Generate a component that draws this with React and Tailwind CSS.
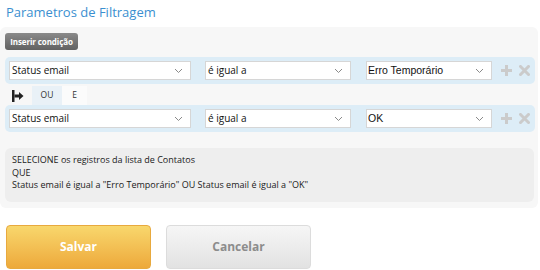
import React from 'react';

const Chevron = () => (
    <svg width="9" height="6" viewBox="0 0 9 6" className="shrink-0">
        <path d="M1 1 L4.5 4.5 L8 1" fill="none" stroke="#8a8a8a" strokeWidth="1" />
    </svg>
);

const Select = ({ value, width, arial }) => (
    <div
        className={`h-[19px] bg-white border border-[#d6d6d6] flex items-center justify-between pr-[7px] text-[#111] ${arial ? "font-['Liberation_Sans',sans-serif] text-[10.5px] pl-[1px]" : 'text-[10px] pl-[2px]'}`}
        style={{ width }}
    >
        <span>{value}</span>
        <Chevron />
    </div>
);

const PlusIcon = () => (
    <svg width="11" height="11" viewBox="0 0 11 11">
        <path d="M4 0 H7 V4 H11 V7 H7 V11 H4 V7 H0 V4 H4 Z" fill="#cbcbcb" />
    </svg>
);

const CloseIcon = () => (
    <svg width="11" height="11" viewBox="0 0 11 11">
        <path d="M1.5 1.5 L9.5 9.5 M9.5 1.5 L1.5 9.5" stroke="#cbcbcb" strokeWidth="3" strokeLinecap="square" />
    </svg>
);

const ConditionRow = ({ value }) => (
    <div className="w-[530px] h-[27px] bg-[#ddedf7] rounded-[5px] flex items-center pl-[4px]">
        <Select value="Status email" width={182} />
        <div className="w-[14px]" />
        <Select value="é igual a" width={146} />
        <div className="w-[15px]" />
        <Select value={value} width={126} arial />
        <div className="flex items-center gap-[7px] ml-[9px]">
            <PlusIcon />
            <CloseIcon />
        </div>
    </div>
);

const JoinIcon = () => (
    <svg width="12" height="12" viewBox="0 0 12 12">
        <rect x="0" y="0" width="2.5" height="12" fill="#222" />
        <rect x="2.5" y="4.5" width="5" height="3" fill="#222" />
        <path d="M7 2 L11.5 6 L7 10 Z" fill="#222" />
    </svg>
);

export default function App() {
    return (
        <div className="w-[540px] h-[270px] bg-white font-['Open_Sans',sans-serif] overflow-hidden">
            {/* Title */}
            <div className="pt-[3px] pl-[6px] h-[27px] text-[13px] text-[#3b8fd0]">
                Parametros de Filtragem
            </div>

            {/* Filter panel */}
            <div className="w-[538px] bg-[#f7f7f7] rounded-[6px] pt-[6px] pb-[6px] pl-[5px]">
                <button className="block h-[17px] w-[73px] rounded-[3px] bg-gradient-to-b from-[#8a8a8a] to-[#626262] text-white text-[8px] font-bold tracking-[-0.1px] leading-none whitespace-nowrap">
                    Inserir condição
                </button>

                <div className="mt-[7px]">
                    <ConditionRow value="Erro Temporário" />
                </div>

                {/* OU / E */}
                <div className="h-[19px] flex items-stretch mt-[2px]">
                    <div className="w-[27px] flex items-center pl-[7px]">
                        <JoinIcon />
                    </div>
                    <div className="w-[30px] bg-[#e9f1f7] flex items-center justify-center text-[8.5px] text-[#333]">OU</div>
                    <div className="w-[25px] bg-[#fbfbfb] flex items-center justify-center text-[8.5px] text-[#333]">E</div>
                </div>

                <ConditionRow value="OK" />

                {/* Summary */}
                <div className="w-[529px] mt-[16px] h-[54px] bg-[#eeeeee] rounded-[6px] pl-[7px] pt-[6px] text-[9px] leading-[12.5px] text-[#1a1a1a]">
                    <div>SELECIONE os registros da lista de Contatos</div>
                    <div>QUE</div>
                    <div>Status email é igual a "Erro Temporário" OU Status email é igual a "OK"</div>
                </div>
            </div>

            {/* Actions */}
            <div className="flex gap-[15px] pl-[6px] mt-[17px]">
                <button className="w-[145px] h-[44px] rounded-[4px] border border-[#e8a93e] bg-gradient-to-b from-[#f8d76c] to-[#eda93a] text-white text-[12px] font-bold">
                    Salvar
                </button>
                <button className="w-[145px] h-[44px] rounded-[4px] border border-[#dcdcdc] bg-gradient-to-b from-[#f6f6f6] to-[#e2e2e2] text-[#8c8c8c] text-[12px] font-bold">
                    Cancelar
                </button>
            </div>
        </div>
    );
}
